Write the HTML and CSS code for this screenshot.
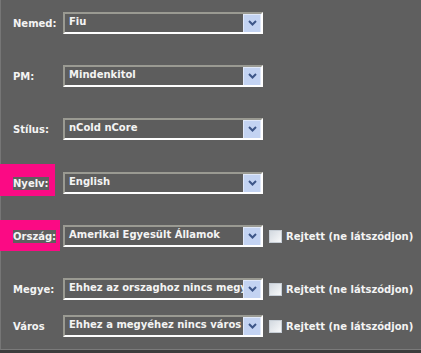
FILE: index.html
```html
<!DOCTYPE html>
<html>
<head>
    <title>Beállítások</title>
    <meta charset="utf-8">
    <link rel="stylesheet" href="styles.css">
</head>
<body>
    <div class="panel">
        <div class="row">
            <div class="label"><span>Nemed:</span></div>
            <div class="select"><span class="value">Fiu</span><span class="arrow"><svg width="9" height="6" viewBox="0 0 9 6"><path d="M1 1 L4.5 4.5 L8 1" fill="none" stroke="#3d5688" stroke-width="2"/></svg></span></div>
        </div>
        <div class="row">
            <div class="label"><span>PM:</span></div>
            <div class="select"><span class="value">Mindenkitol</span><span class="arrow"><svg width="9" height="6" viewBox="0 0 9 6"><path d="M1 1 L4.5 4.5 L8 1" fill="none" stroke="#3d5688" stroke-width="2"/></svg></span></div>
        </div>
        <div class="row">
            <div class="label"><span>Stílus:</span></div>
            <div class="select"><span class="value">nCold nCore</span><span class="arrow"><svg width="9" height="6" viewBox="0 0 9 6"><path d="M1 1 L4.5 4.5 L8 1" fill="none" stroke="#3d5688" stroke-width="2"/></svg></span></div>
        </div>
        <div class="row">
            <div class="label marked marked-nyelv"><span>Nyelv:</span></div>
            <div class="select"><span class="value">English</span><span class="arrow"><svg width="9" height="6" viewBox="0 0 9 6"><path d="M1 1 L4.5 4.5 L8 1" fill="none" stroke="#3d5688" stroke-width="2"/></svg></span></div>
        </div>
        <div class="row">
            <div class="label marked marked-orszag"><span>Ország:</span></div>
            <div class="select"><span class="value">Amerikai Egyesült Államok</span><span class="arrow"><svg width="9" height="6" viewBox="0 0 9 6"><path d="M1 1 L4.5 4.5 L8 1" fill="none" stroke="#3d5688" stroke-width="2"/></svg></span></div>
            <label class="hide"><span class="check"></span>Rejtett (ne látszódjon)</label>
        </div>
        <div class="row">
            <div class="label"><span>Megye:</span></div>
            <div class="select"><span class="value">Ehhez az orszaghoz nincs megye</span><span class="arrow"><svg width="9" height="6" viewBox="0 0 9 6"><path d="M1 1 L4.5 4.5 L8 1" fill="none" stroke="#3d5688" stroke-width="2"/></svg></span></div>
            <label class="hide"><span class="check"></span>Rejtett (ne látszódjon)</label>
        </div>
        <div class="row row-last">
            <div class="label"><span>Város</span></div>
            <div class="select"><span class="value">Ehhez a megyéhez nincs város</span><span class="arrow"><svg width="9" height="6" viewBox="0 0 9 6"><path d="M1 1 L4.5 4.5 L8 1" fill="none" stroke="#3d5688" stroke-width="2"/></svg></span></div>
            <label class="hide"><span class="check"></span>Rejtett (ne látszódjon)</label>
        </div>
    </div>
    <div class="footer"></div>
</body>
</html>
```

FILE: styles.css
```css
body {
    margin: 0;
    background: #3c3c3c;
    font-family: "DejaVu Sans", Verdana, sans-serif;
    font-size: 10px;
    font-weight: bold;
    color: #f4f4f4;
}
.panel {
    background: #5f5f5f;
    border-left: 1px solid #767676;
    border-bottom: 1px solid #7a7a7a;
    height: 350px;
    padding-top: 12px;
    box-sizing: border-box;
}
.row {
    display: flex;
    align-items: center;
    margin-bottom: 31px;
    padding-left: 12px;
}
.row-last { margin-bottom: 0; }
.row:nth-child(6) { margin-bottom: 15px; }
.row:nth-child(3) { margin-bottom: 32px; }
.label {
    width: 50px;
    position: relative;
    z-index: 0;
}
.label span {
    background: #5f5f5f;
    padding: 1px 0;
}
.marked::before {
    content: "";
    position: absolute;
    background: #fb0a84;
    z-index: -1;
}
.marked-nyelv::before { left: -13px; top: -14px; width: 55px; height: 32px; }
.marked-orszag::before { left: -13px; top: -11px; width: 60px; height: 31px; }
.select {
    width: 200px;
    height: 22px;
    box-sizing: border-box;
    border: 2px solid;
    border-color: #9a9a92 #ffffff #ffffff #9a9a92;
    background: #5d5d5d;
    display: flex;
    align-items: center;
    overflow: hidden;
}
.value {
    flex: 1;
    padding-left: 4px;
    padding-bottom: 3px;
    line-height: 14px;
    white-space: nowrap;
    overflow: hidden;
}
.arrow {
    width: 16px;
    height: 17px;
    flex: none;
    background: #c3d3f2;
    border: 1px solid #e0e8f9;
    display: flex;
    align-items: center;
    justify-content: center;
}
.hide {
    display: flex;
    align-items: center;
    margin-left: 6px;
}
.check {
    width: 11px;
    height: 11px;
    border: 1px solid #c7ced6;
    background: linear-gradient(135deg, #d3d9e0 0%, #f8f9fa 100%);
    margin-right: 4px;
}
.footer {
    height: 3px;
}
```
